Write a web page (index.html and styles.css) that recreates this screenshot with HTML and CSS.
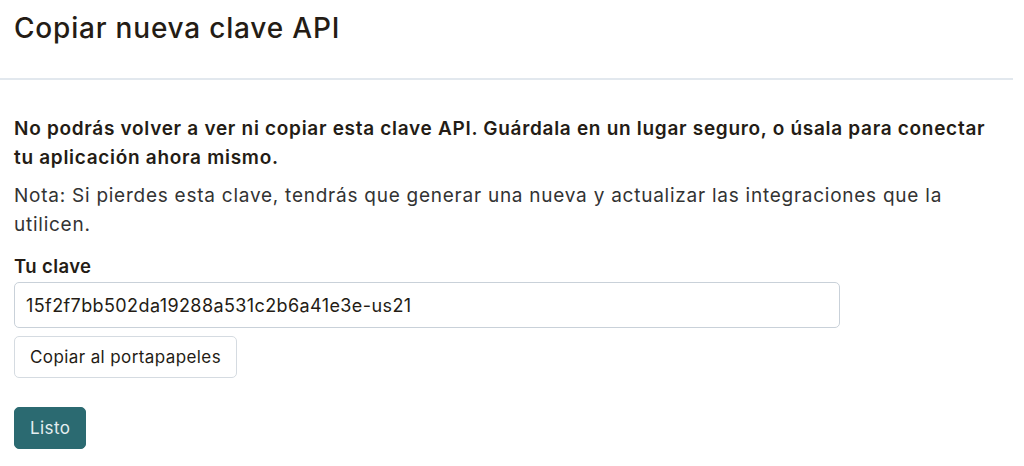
FILE: index.html
```html
<!DOCTYPE html>
<html lang="es">
<head>
    <meta charset="UTF-8">
    <meta name="viewport" content="width=device-width, initial-scale=1.0">
    <title>Copiar nueva clave API</title>
    <link rel="stylesheet" href="styles.css">
</head>
<body>
    <div class="modal">
        <header class="modal-header">
            <h1>Copiar nueva clave API</h1>
        </header>

        <div class="modal-body">
            <p class="warning">No podrás volver a ver ni copiar esta clave API. Guárdala en un lugar seguro, o úsala para conectar tu aplicación ahora mismo.</p>
            <p class="note">Nota: Si pierdes esta clave, tendrás que generar una nueva y actualizar las integraciones que la utilicen.</p>

            <label class="field-label" for="api-key">Tu clave</label>
            <input type="text" id="api-key" class="key-input" value="15f2f7bb502da19288a531c2b6a41e3e-us21" readonly>
            <button class="btn btn-secondary" type="button">Copiar al portapapeles</button>

            <div class="actions">
                <button class="btn btn-primary" type="button">Listo</button>
            </div>
        </div>
    </div>
</body>
</html>
```

FILE: styles.css
```css
* {
    margin: 0;
    padding: 0;
    box-sizing: border-box;
    font-family: 'Inter', 'Noto Sans', sans-serif;
}

body {
    background: #fff;
    color: #241c15;
}

.modal {
    width: 1013px;
}

.modal-header {
    height: 80px;
    padding: 10px 14px 0;
    border-bottom: 2px solid #e2e8ee;
}

h1 {
    font-size: 28px;
    font-weight: 500;
    line-height: 36px;
    letter-spacing: 0.8px;
    color: #241c15;
}

.modal-body {
    padding: 34px 14px 0;
}

.warning,
.note {
    font-size: 19px;
    line-height: 29px;
    width: 980px;
}

.warning {
    font-weight: 600;
    letter-spacing: 0.7px;
}

.note {
    margin-top: 9px;
    letter-spacing: 0.75px;
    color: #333;
}

.field-label {
    display: block;
    font-size: 18.5px;
    font-weight: 600;
    line-height: 24px;
    letter-spacing: 0.4px;
    margin-top: 15px;
}

.key-input {
    display: block;
    width: 826px;
    height: 46px;
    margin-top: 4px;
    padding: 0 11px;
    border: 1px solid #c9d1d9;
    border-radius: 5px;
    font-size: 18px;
    letter-spacing: 0.4px;
    color: #241c15;
    outline: none;
}

.btn {
    display: inline-block;
    height: 42px;
    padding: 0 15px;
    border-radius: 5px;
    font-size: 17px;
    letter-spacing: 0.4px;
    cursor: pointer;
}

.btn-secondary {
    margin-top: 8px;
    background: #fff;
    color: #241c15;
    border: 1px solid #d5dbe1;
}

.actions {
    margin-top: 29px;
}

.btn-primary {
    background: #2b6a71;
    color: #e4eef0;
    border: 1px solid #2b6a71;
}
```
